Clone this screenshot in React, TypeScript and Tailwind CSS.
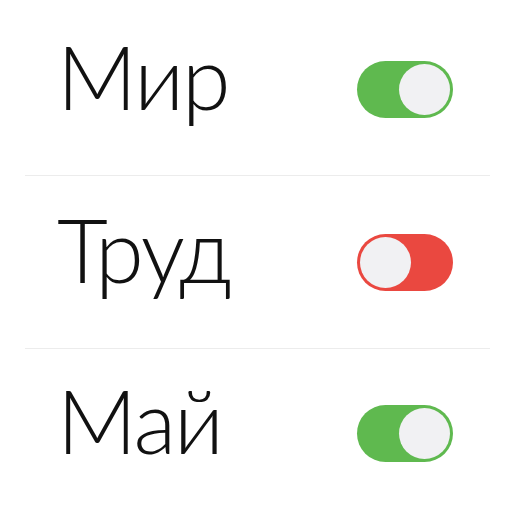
import { useState } from "react";

interface Item {
  id: number;
  label: string;
  on: boolean;
}

const initialItems: Item[] = [
  { id: 1, label: "Мир", on: true },
  { id: 2, label: "Труд", on: false },
  { id: 3, label: "Май", on: true },
];

function Toggle({ on, onClick }: { on: boolean; onClick: () => void }) {
  return (
    <button
      onClick={onClick}
      className={`flex w-[96px] h-[57px] shrink-0 rounded-full p-[3px] ${
        on ? "bg-[#5fb94f] justify-end" : "bg-[#ea4840] justify-start"
      }`}
    >
      <span className="block w-[51px] h-[51px] rounded-full bg-[#f1f1f3]" />
    </button>
  );
}

export default function App() {
  const [items, setItems] = useState<Item[]>(initialItems);

  function toggle(id: number) {
    setItems(items.map((it) => (it.id === id ? { ...it, on: !it.on } : it)));
  }

  return (
    <div
      className="w-[507px] h-[515px] bg-white pl-[25px] pr-[17px] flex flex-col text-[#111]"
      style={{ fontFamily: "Lato, 'Open Sans', sans-serif" }}
    >
      {items.map((item, i) => (
        <div
          key={item.id}
          className={`flex items-center justify-between pl-[32px] pr-[37px] ${
            i === 0 ? "h-[176px] pt-[3px]" : i === 1 ? "h-[173px]" : "flex-1 pt-[3px]"
          } ${i < items.length - 1 ? "border-b border-[#ececec]" : ""}`}
        >
          <span className="text-[88px] font-light leading-none tracking-[-2px] pb-[27px]">
            {item.label}
          </span>
          <Toggle on={item.on} onClick={() => toggle(item.id)} />
        </div>
      ))}
    </div>
  );
}
